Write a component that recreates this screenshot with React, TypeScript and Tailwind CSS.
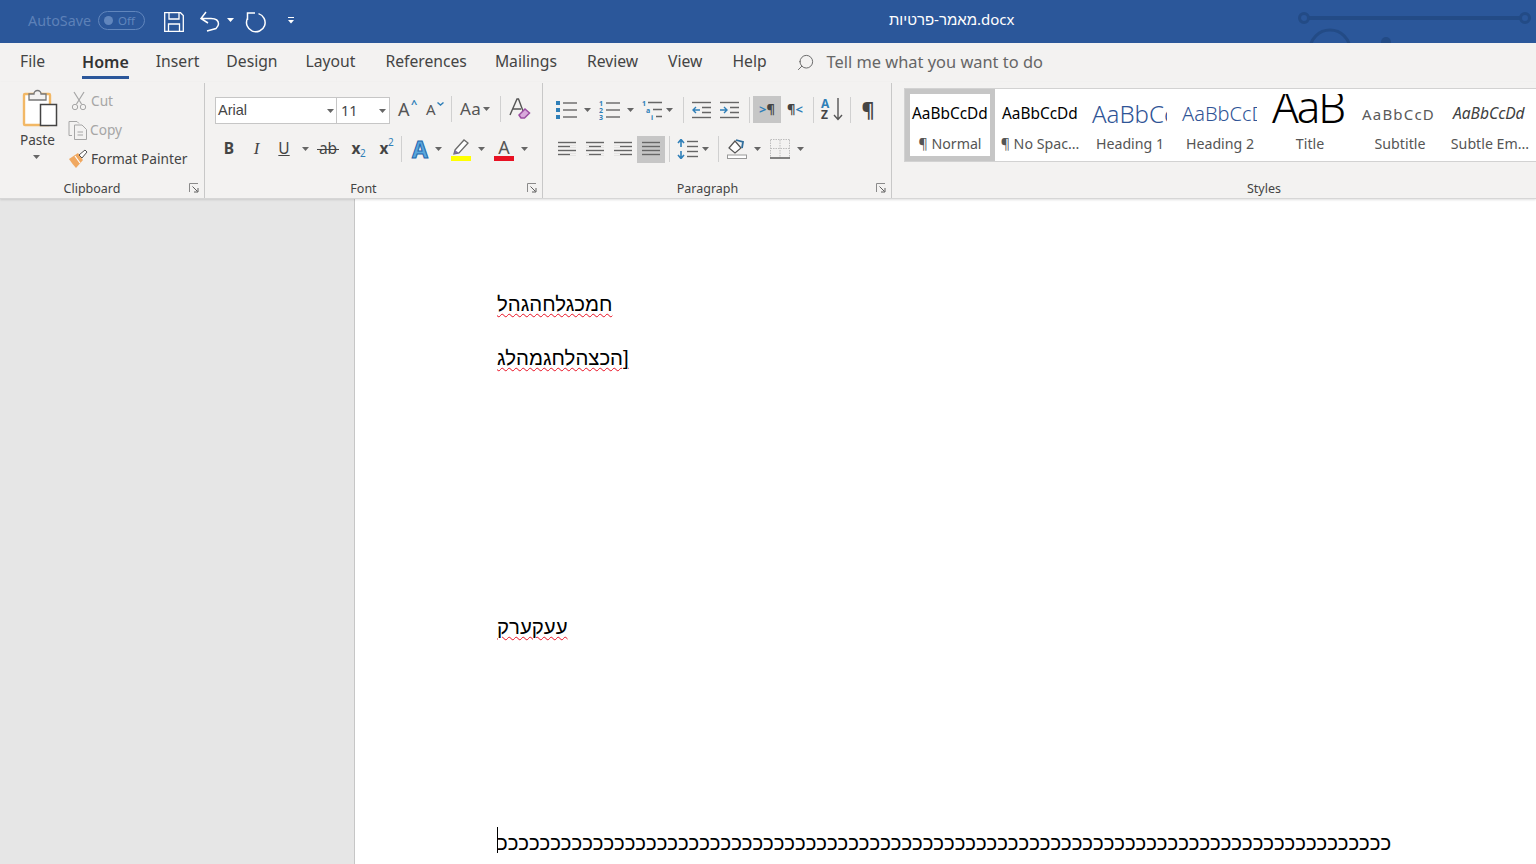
import { Search } from "lucide-react";
import type { ReactNode } from "react";

const ui = "font-['Noto_Sans',sans-serif]";

function Caret({ className = "" }: { className?: string }) {
  return (
    <svg width="7" height="4" viewBox="0 0 7 4" className={className}>
      <path d="M0 0h7L3.5 4z" fill="#666" />
    </svg>
  );
}

function Launcher() {
  return (
    <svg width="10" height="10" viewBox="0 0 10 10" className="absolute right-[5px] bottom-[5px]" fill="none">
      <path d="M.5 9V.5H9" stroke="#8a8a8a" />
      <path d="M3.5 3.5L8.5 8.5M9 5v4H5" stroke="#5f5f5f" />
    </svg>
  );
}

function Sep({ className = "" }: { className?: string }) {
  return <div className={`w-px h-[26px] bg-[#d0d0d0] shrink-0 ${className}`} />;
}

function Group({ label, className, labelClass, children }: { label: string; className: string; labelClass: string; children: ReactNode }) {
  return (
    <div className={`relative flex flex-col shrink-0 border-r border-[#c8c8c8] ${className}`}>
      <div className="flex-1 min-h-0">{children}</div>
      <div className={`h-[19px] text-center text-[12.5px] leading-[19px] text-[#444] ${labelClass}`}>{label}</div>
    </div>
  );
}

function Lines({ rows, x1 = 0, x2 = 20 }: { rows: number[]; x1?: number; x2?: number }) {
  return (
    <>
      {rows.map((y) => (
        <path key={y} d={`M${x1} ${y + 0.5}H${x2}`} stroke="#666" strokeWidth="1.4" />
      ))}
    </>
  );
}

function TitleBar() {
  return (
    <div className={`relative h-[43px] bg-[#2b579a] flex items-center pb-[2px] shrink-0 overflow-hidden ${ui}`}>
      <svg width="240" height="43" viewBox="0 0 240 43" fill="none" className="absolute left-[1296px] top-0">
        <path d="M13 18H224" stroke="#234b86" strokeWidth="4" />
        <circle cx="8" cy="18" r="4.5" stroke="#234b86" strokeWidth="3" />
        <circle cx="229" cy="18" r="4.5" stroke="#234b86" strokeWidth="3" />
        <circle cx="34" cy="50" r="20" stroke="#234b86" strokeWidth="3" />
        <circle cx="90" cy="42" r="5" fill="#234b86" />
      </svg>
      <span className="ml-[28px] text-[14.3px] text-[#5d81b8]">AutoSave</span>
      <div className="ml-[7px] w-[47px] h-[19px] rounded-full border border-[#6186bd] flex items-center pl-[5px] gap-[5px]">
        <div className="w-[9px] h-[9px] rounded-full bg-[#6186bd]" />
        <span className="text-[11.5px] text-[#6186bd]">Off</span>
      </div>
      <svg width="20" height="20" viewBox="0 0 20 20" fill="none" className="ml-[19px] mt-[2px]" stroke="#fff" strokeWidth="1.3">
        <path d="M.7.7H16.5L19.3 3.5V19.3H.7z" />
        <path d="M5 1V7H15V1M4.5 19V12H15.5V19" />
      </svg>
      <svg width="22" height="22" viewBox="0 0 22 22" fill="none" className="ml-[15px]" stroke="#fff" strokeWidth="1.5">
        <path d="M2 8.5H12Q19.5 8.5 19.5 14Q19.5 16 17 18.5L8 21M7 2L2 8.5L9 13" />
      </svg>
      <Caret className="ml-[6px] mb-[2px] [&_path]:fill-white" />
      <svg width="21" height="22" viewBox="0 0 21 22" fill="none" className="ml-[11px] mt-[2px]" stroke="#fff" strokeWidth="1.5">
        <path d="M13.5 2.6A9.3 9.3 0 1 1 2.4 7.5M2.5 9V2H10" />
      </svg>
      <svg width="6" height="7" viewBox="0 0 6 7" className="ml-[22px]">
        <path d="M0 .5H6" stroke="#fff" />
        <path d="M0 3H6L3 6.5z" fill="#fff" />
      </svg>
      <span className="absolute left-[889px] top-[9px] text-[15px] leading-[20px] text-white font-['Noto_Sans','Liberation_Sans',sans-serif]">
        מאמר-פרטיות.docx
      </span>
    </div>
  );
}

function Tabs() {
  return (
    <div className={`h-[39px] bg-[#f3f2f1] flex items-center pb-[1px] text-[15.7px] text-[#444] shrink-0 ${ui}`}>
      <span className="ml-[20px]">File</span>
      <span className="ml-[37px] relative font-semibold text-[16px] text-[#333]">
        Home
        <span className="absolute left-0 right-0 -bottom-[5px] h-[3px] bg-[#2b579a]" />
      </span>
      <span className="ml-[27px]">Insert</span>
      <span className="ml-[27px]">Design</span>
      <span className="ml-[28px]">Layout</span>
      <span className="ml-[30px]">References</span>
      <span className="ml-[28px]">Mailings</span>
      <span className="ml-[30px]">Review</span>
      <span className="ml-[30px]">View</span>
      <span className="ml-[30px]">Help</span>
      <Search className="ml-[29px] size-[19px] -scale-x-100 text-[#666]" strokeWidth={1.2} />
      <span className="ml-[12px] text-[16.4px] text-[#666]">Tell me what you want to do</span>
    </div>
  );
}

function Clipboard() {
  return (
    <Group label="Clipboard" className="w-[205px]" labelClass="pr-[20px]">
      <div className="flex">
        <div className="w-[67px] pl-[20px] flex flex-col items-start text-[13.6px] text-[#444]">
          <svg width="38" height="41" viewBox="0 0 38 41" fill="none" className="mt-[4px]">
            <rect x="4" y="7" width="26" height="31" rx="1" fill="#fff" stroke="#f2b866" strokeWidth="2.4" />
            <path d="M9 13V7H14A3.5 3.5 0 0 1 21 7H26V13Z" fill="#f3f2f1" stroke="#777" strokeWidth="1.3" />
            <rect x="20.5" y="17.5" width="16" height="21" fill="#fff" stroke="#444" strokeWidth="1.5" />
          </svg>
          <span className="leading-[20px] mt-[2px]">Paste</span>
          <Caret className="ml-[13px] mt-[5px]" />
        </div>
        <div className="flex flex-col text-[13.7px] leading-[29px] pt-[3px]">
          <div className="flex items-center h-[29px] text-[#a6a6a6]">
            <svg width="16" height="20" viewBox="0 0 16 20" fill="none" stroke="#a6a6a6" className="ml-[4px]">
              <path d="M3 1L10.5 13M13 1L5.5 13" strokeWidth="1.2" />
              <circle cx="4" cy="16" r="2.7" />
              <circle cx="12" cy="16" r="2.7" />
            </svg>
            <span className="ml-[4px]">Cut</span>
          </div>
          <div className="flex items-center h-[29px] text-[#a6a6a6]">
            <svg width="20" height="20" viewBox="0 0 20 20" fill="none" stroke="#a6a6a6" className="ml-[1px]">
              <path d="M4 15.5H1V1.5H9L11 3.5" />
              <path d="M6.5 5H14L18.5 9.5V19.5H6.5Z" fill="#f3f2f1" />
              <path d="M9.5 12H15M9.5 15H15" />
            </svg>
            <span className="ml-[2px]">Copy</span>
          </div>
          <div className="flex items-center h-[29px] text-[#444]">
            <svg width="20" height="20" viewBox="0 0 20 20" fill="none" className="ml-[1px]">
              <path d="M1 10L10 4L15 11L8 19Q5 16 1 10Z" fill="#f0a860" />
              <path d="M7 7L12 14" stroke="#fff" strokeWidth="1.2" />
              <path d="M11 6L17 1L19 3L14 9Z" fill="#fff" stroke="#555" />
            </svg>
            <span className="ml-[3px]">Format Painter</span>
          </div>
        </div>
      </div>
      <Launcher />
    </Group>
  );
}

function Font() {
  return (
    <Group label="Font" className="w-[338px]" labelClass="pr-[20px]">
      <div className="flex items-center pl-[10px] pt-[14px] h-[41px]">
        <div className="w-[122px] h-[27px] bg-white border border-[#c6c6c6] flex items-center justify-between pl-[2px] pr-[2px] text-[14.5px] text-[#444] font-['Liberation_Sans',sans-serif]">
          Arial
          <Caret />
        </div>
        <div className="w-[53px] h-[27px] bg-white border border-l-0 border-[#c6c6c6] flex items-center justify-between pl-[4px] pr-[3px] text-[14.5px] text-[#444]">
          11
          <Caret />
        </div>
        <div className="w-[26px] ml-[8px] -mt-[4px] text-[#555] text-[18px] leading-none relative">
          A
          <span className="absolute left-[13px] -top-[2px] text-[11px] text-[#2f7fb8] font-bold">^</span>
        </div>
        <div className="w-[26px] ml-[2px] -mt-[2px] text-[#555] text-[15px] leading-none relative">
          A
          <svg width="7" height="4" viewBox="0 0 7 4" fill="none" className="absolute left-[11px] top-0">
            <path d="M.5.5L3.5 3L6.5.5" stroke="#2f7fb8" strokeWidth="1.4" />
          </svg>
        </div>
        <Sep className="-ml-[1px] -mt-[3px]" />
        <div className="ml-[8px] -mt-[3px] w-[31px] flex items-center gap-[2px] text-[17px] text-[#555] tracking-wide">
          Aa
          <Caret className="shrink-0" />
        </div>
        <Sep className="ml-[9px] -mt-[3px]" />
        <svg width="22" height="22" viewBox="0 0 22 22" fill="none" className="ml-[8px] -mt-[3px]">
          <path d="M1 17L8 1H9.5L14 13M4 11H12" stroke="#555" strokeWidth="1.4" />
          <path d="M10 17L16 11L20.5 15L15.5 20H12Z" fill="#d9a9dc" stroke="#9c4ea3" strokeWidth="1.5" />
        </svg>
      </div>
      <div className="flex items-center pl-[10px] mt-[11px] h-[28px] text-[15.5px] text-[#444]">
        <div className="w-[28px] text-center font-bold">B</div>
        <div className="w-[27px] text-center italic font-['Liberation_Serif',serif] text-[17px]">I</div>
        <div className="w-[28px] text-center underline">U</div>
        <Caret className="mx-[4px] shrink-0" />
        <div className="w-[28px] ml-[1px] text-center relative">
          ab
          <div className="absolute left-[3px] right-[3px] top-[12px] h-px bg-[#444]" />
        </div>
        <div className="w-[28px] text-center font-bold relative">
          x<span className="absolute left-[18px] top-[9px] text-[10px] font-normal text-[#2f7fb8]">2</span>
        </div>
        <div className="w-[28px] text-center font-bold relative">
          x<span className="absolute left-[18px] -top-[2px] text-[10px] font-normal text-[#2f7fb8]">2</span>
        </div>
        <Sep className="ml-[3px]" />
        <div className="w-[28px] ml-[4px] text-center text-[23px] leading-none font-bold text-[#5aa7dc] [-webkit-text-stroke:1px_#1f66ad]">A</div>
        <Caret className="ml-[1px] shrink-0" />
        <svg width="22" height="24" viewBox="0 0 22 24" fill="none" className="ml-[8px] shrink-0">
          <path d="M5 13L14 3L18 6L9 16L4 17Z" fill="#fff" stroke="#6b6b6b" strokeWidth="1.3" />
          <path d="M4 17L5 13L9 16Z" fill="#7e6fa5" />
          <rect x="1" y="19" width="20" height="5" fill="#ffff00" />
        </svg>
        <Caret className="ml-[6px] shrink-0" />
        <div className="ml-[9px] w-[20px] shrink-0 flex flex-col items-center text-[18px] leading-[18px] text-[#555]">
          A
          <div className="w-[20px] h-[5px] bg-[#e81123]" />
        </div>
        <Caret className="ml-[7px] shrink-0" />
      </div>
      <Launcher />
    </Group>
  );
}

function Paragraph() {
  return (
    <Group label="Paragraph" className="w-[349px]" labelClass="pr-[19px]">
      <div className="flex items-center pl-[13px] pt-[13px] h-[40px]">
        <svg width="22" height="20" viewBox="0 0 22 20" fill="none" className="shrink-0">
          <rect y="1" width="4" height="4" fill="#2f7fb8" />
          <rect y="8" width="4" height="4" fill="#2f7fb8" />
          <rect y="15" width="4" height="4" fill="#2f7fb8" />
          <Lines rows={[2.5, 9.5, 16.5]} x1={7} x2={21} />
        </svg>
        <Caret className="ml-[6px] shrink-0" />
        <svg width="22" height="20" viewBox="0 0 22 20" fill="none" className="ml-[8px] shrink-0">
          <text x="0" y="6" fontSize="7" fill="#2f7fb8" fontWeight="700">1</text>
          <text x="0" y="13" fontSize="7" fill="#2f7fb8" fontWeight="700">2</text>
          <text x="0" y="20" fontSize="7" fill="#2f7fb8" fontWeight="700">3</text>
          <Lines rows={[2.5, 9.5, 16.5]} x1={7} x2={21} />
        </svg>
        <Caret className="ml-[6px] shrink-0" />
        <svg width="22" height="20" viewBox="0 0 22 20" fill="none" className="ml-[8px] shrink-0">
          <text x="0" y="6" fontSize="7" fill="#2f7fb8" fontWeight="700">1</text>
          <text x="4" y="13" fontSize="7" fill="#2f7fb8" fontWeight="700">a</text>
          <text x="9" y="20" fontSize="7" fill="#2f7fb8" fontWeight="700">i</text>
          <path d="M6 2.5H20M11 9.5H20M14 16.5H20" stroke="#666" strokeWidth="1.4" />
        </svg>
        <Caret className="ml-[2px] shrink-0" />
        <Sep className="ml-[10px]" />
        <svg width="20" height="18" viewBox="0 0 20 18" fill="none" className="ml-[8px] shrink-0">
          <Lines rows={[1, 16]} x1={0} x2={19} />
          <path d="M10 6.5H19M10 11.5H19" stroke="#666" strokeWidth="1.4" />
          <path d="M8 9H1M4 6L1 9L4 12" stroke="#2f7fb8" strokeWidth="1.4" />
        </svg>
        <svg width="20" height="18" viewBox="0 0 20 18" fill="none" className="ml-[8px] shrink-0">
          <Lines rows={[1, 16]} x1={0} x2={19} />
          <path d="M10 6.5H19M10 11.5H19" stroke="#666" strokeWidth="1.4" />
          <path d="M0 9H7M4 6L7 9L4 12" stroke="#2f7fb8" strokeWidth="1.4" />
        </svg>
        <Sep className="ml-[9px]" />
        <div className="ml-[3px] w-[28px] h-[27px] bg-[#c6c6c6] flex items-center justify-center text-[13px] font-bold text-[#444]">
          <span className="text-[#2f7fb8]">&gt;</span>¶
        </div>
        <div className="w-[28px] h-[27px] flex items-center justify-center text-[13px] font-bold text-[#444]">
          ¶<span className="text-[#2f7fb8]">&lt;</span>
        </div>
        <Sep className="ml-[4px]" />
        <div className="ml-[7px] w-[22px] h-[24px] relative shrink-0 font-bold text-[12px] leading-[11px]">
          <span className="text-[#2f7fb8]">A</span>
          <br />
          <span className="text-[#444]">Z</span>
          <svg width="10" height="23" viewBox="0 0 10 23" fill="none" className="absolute right-0 top-0">
            <path d="M5 0V21M1 17L5 21.5L9 17" stroke="#555" strokeWidth="1.4" />
          </svg>
        </div>
        <Sep className="ml-[7px]" />
        <div className="ml-[3px] w-[28px] text-center text-[20px] font-bold text-[#444] leading-none">¶</div>
      </div>
      <div className="flex items-center pl-[10px] mt-[12px] h-[28px]">
        <div className="w-[28px] h-[27px] flex items-center justify-center">
          <svg width="18" height="16" viewBox="0 0 18 16" fill="none"><Lines rows={[1, 5, 9, 13]} x1={0} x2={18} /><path d="M12 5.5H18M12 13.5H18" stroke="#f3f2f1" strokeWidth="2" /></svg>
        </div>
        <div className="w-[28px] h-[27px] flex items-center justify-center">
          <svg width="18" height="16" viewBox="0 0 18 16" fill="none"><Lines rows={[1, 5, 9, 13]} x1={0} x2={18} /><path d="M0 5.5H3M15 5.5H18M0 13.5H3M15 13.5H18" stroke="#f3f2f1" strokeWidth="2" /></svg>
        </div>
        <div className="w-[28px] h-[27px] flex items-center justify-center">
          <svg width="18" height="16" viewBox="0 0 18 16" fill="none"><Lines rows={[1, 5, 9, 13]} x1={0} x2={18} /><path d="M0 5.5H6M0 13.5H6" stroke="#f3f2f1" strokeWidth="2" /></svg>
        </div>
        <div className="w-[28px] h-[27px] bg-[#c6c6c6] flex items-center justify-center">
          <svg width="18" height="16" viewBox="0 0 18 16" fill="none"><Lines rows={[1, 5, 9, 13]} x1={0} x2={18} /></svg>
        </div>
        <Sep className="ml-[4px]" />
        <svg width="23" height="20" viewBox="0 0 23 20" fill="none" className="ml-[7px] shrink-0">
          <path d="M4 8V1M1 4L4 .5L7 4M4 12V19M1 16L4 19.5L7 16" stroke="#2f7fb8" strokeWidth="1.6" />
          <Lines rows={[2, 7, 12, 17]} x1={10} x2={21} />
        </svg>
        <Caret className="ml-[2px] shrink-0" />
        <Sep className="ml-[9px]" />
        <svg width="23" height="20" viewBox="0 0 23 20" fill="none" className="ml-[8px] shrink-0">
          <path d="M2 9L8 2L14 9L8 14Z" fill="#fff" stroke="#555" strokeWidth="1.2" />
          <path d="M9 1L16 3L15 9" stroke="#2f6d9c" strokeWidth="1.8" />
          <rect x=".5" y="16" width="19" height="3.5" fill="#fff" stroke="#999" />
        </svg>
        <Caret className="ml-[4px] shrink-0" />
        <svg width="20" height="20" viewBox="0 0 20 20" fill="none" className="ml-[9px] shrink-0">
          <path d="M.5 1V19M19.5 1V19M.5 .5H19.5M.5 9.5H19.5M10 1V19" stroke="#bdbdbd" strokeDasharray="1.5 1" />
          <path d="M0 19H20" stroke="#666" strokeWidth="1.6" />
        </svg>
        <Caret className="ml-[7px] shrink-0" />
      </div>
      <Launcher />
    </Group>
  );
}

const styleItems = [
  { name: "Normal", mark: true, preview: "text-[15.4px] text-black", frame: true, text: "AaBbCcDd", clip: "w-[80px]" },
  { name: "No Spac...", mark: true, preview: "text-[15.4px] text-black", frame: false, text: "AaBbCcDd", clip: "w-[80px]" },
  { name: "Heading 1", mark: false, preview: "text-[24px] text-[#2f5496] font-light", frame: false, text: "AaBbCc", clip: "w-[77px]" },
  { name: "Heading 2", mark: false, preview: "text-[20px] text-[#2f5496] font-light", frame: false, text: "AaBbCcD", clip: "w-[77px]" },
  { name: "Title", mark: false, preview: "text-[44px] text-black font-light tracking-[-2px] -mt-[20px]", frame: false, text: "AaB", clip: "w-[78px] pt-[3px]" },
  { name: "Subtitle", mark: false, preview: "text-[15px] text-[#5a5a5a] tracking-[1.2px]", frame: false, text: "AaBbCcD", clip: "w-[76px]" },
  { name: "Subtle Em...", mark: false, preview: "text-[15.6px] text-[#404040] italic", frame: false, text: "AaBbCcDd", clip: "w-[80px] pl-[3px]" },
];

function Styles() {
  return (
    <div className="relative flex-1 min-w-0 flex flex-col pl-[12px]">
      <div className="mt-[5px] h-[74px] bg-white border-y border-l border-[#d2d2d2] flex items-stretch overflow-hidden">
        {styleItems.map((s) => (
          <div
            key={s.name}
            className={`w-[90px] shrink-0 flex flex-col items-center ${s.frame ? "border-[5px] border-[#c6c6c6] bg-white" : "border-[5px] border-transparent"}`}
          >
            <div className={`h-[40px] pl-[2px] self-start overflow-hidden flex items-center whitespace-nowrap ${s.clip}`}>
              <span className={`leading-none ${s.preview}`}>{s.text}</span>
            </div>
            <div className="text-[14.2px] leading-[20px] text-[#555] whitespace-nowrap">
              {s.mark ? "¶ " : ""}
              {s.name}
            </div>
          </div>
        ))}
      </div>
      <div className="mt-[17px] h-[19px] text-center text-[12.5px] leading-[19px] text-[#444] pl-[88px]">Styles</div>
    </div>
  );
}

function Ribbon() {
  return (
    <div className={`h-[117px] bg-[#f3f2f1] flex pt-[1px] border-b border-[#d6d6d6] shadow-[0_1px_2px_rgba(0,0,0,0.12)] shrink-0 z-10 ${ui}`}>
      <Clipboard />
      <Font />
      <Paragraph />
      <Styles />
    </div>
  );
}

function Hebrew({ children, wavy = true, className = "" }: { children: string; wavy?: boolean; className?: string }) {
  return (
    <div dir="rtl" className={`w-fit ${className}`}>
      <span className={wavy ? "underline decoration-wavy decoration-[#e81123] decoration-[1.2px] underline-offset-[2px]" : ""}>
        {children}
      </span>
    </div>
  );
}

function Document() {
  return (
    <div className="flex flex-1 min-h-0">
      <div className="w-[354px] bg-[#e6e6e6] shrink-0" />
      <div className="flex-1 bg-white border-l border-[#c6c6c6] pl-[142px] pt-[90px] text-[20.4px] leading-[30px] text-black font-['Liberation_Sans',sans-serif] overflow-hidden">
        <Hebrew>חמכגלחהגהל</Hebrew>
        <div className="mt-[24px]">
          <Hebrew>[הכצהלחגמהלג</Hebrew>
        </div>
        <div className="mt-[239px]">
          <Hebrew>עעקערק</Hebrew>
        </div>
        <div className="mt-[186px] relative w-fit">
          <div className="absolute left-0 -top-[1px] w-px h-[26px] bg-black" />
          <Hebrew wavy={false} className="tracking-[-0.06px]">{"כ".repeat(84)}</Hebrew>
        </div>
      </div>
    </div>
  );
}

export default function App() {
  return (
    <div className="w-[1536px] h-[864px] overflow-hidden flex flex-col">
      <TitleBar />
      <Tabs />
      <Ribbon />
      <Document />
    </div>
  );
}
